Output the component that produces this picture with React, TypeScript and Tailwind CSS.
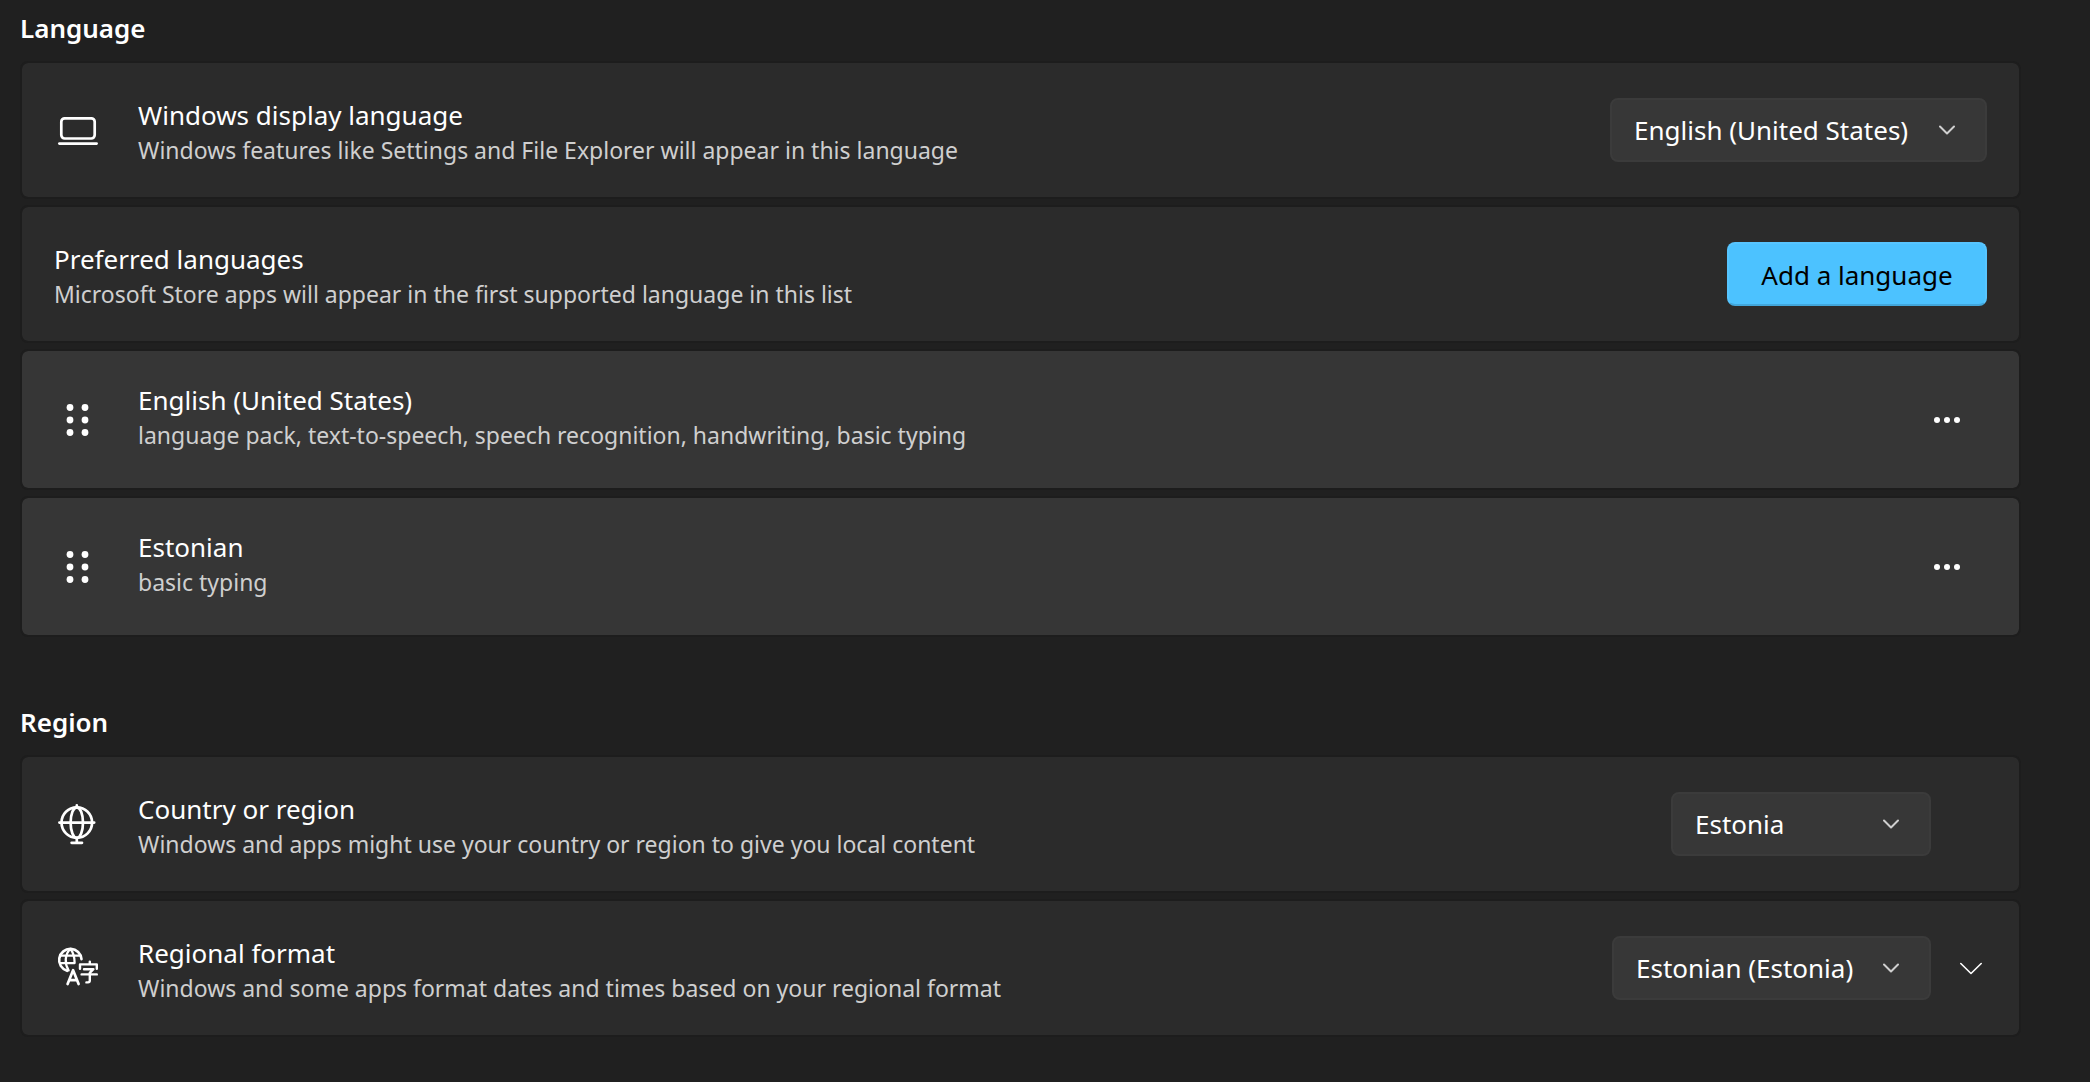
import React, { useId } from "react";

function LaptopIcon() {
  return (
    <svg width="48" height="48" viewBox="0 0 48 48" fill="none" stroke="white" strokeWidth="2.7" aria-hidden="true">
      <rect x="7.3" y="12.3" width="33.4" height="20.2" rx="3.4" />
      <path d="M5.4 37.600h37.2" strokeLinecap="round" />
    </svg>
  );
}

function GlobeStandIcon() {
  return (
    <svg width="48" height="48" viewBox="0 0 48 48" fill="none" stroke="white" strokeWidth="2.7" strokeLinecap="round" aria-hidden="true">
      <circle cx="22.800" cy="22.600" r="15.300" />
      <ellipse cx="22.800" cy="22.600" rx="6.200" ry="15.300" />
      <path d="M5.400 22.600h34.800M22.800 5.400v1.800M22.800 38v4.500M17.600 42.800h10.400" />
    </svg>
  );
}

function RegionalFormatIcon() {
  return (
    <svg width="48" height="48" viewBox="0 0 48 48" fill="none" stroke="white" strokeWidth="2.6" strokeLinecap="round" strokeLinejoin="round" aria-hidden="true">
      <path d="M27.500 15.200A11.200 11.200 0 1 0 13 26.800" />
      <path d="M14.600 26.400c-4-6.400-4.200-16 1.800-21.400c3 3.400 4.200 7.800 4.200 14M6.200 11.700h20M6.200 19.100h14.200" strokeWidth="2.300" />
      <path d="M13.600 40l5.500-13.800 5.500 13.800M15.600 36.200h7" strokeWidth="2.700" />
      <path d="M35.800 17.600v2.200M26 24.800v-4.400h16.800v4.400M30 25.200h9.400l-3.600 3.600v7.800q0 1.800-1.800 1.800h-1.600M27.600 30.400h15.200" strokeWidth="2.400" />
    </svg>
  );
}

function Grip() {
  return (
    <svg width="48" height="48" viewBox="0 0 48 48" fill="white" aria-hidden="true">
      <circle cx="16" cy="11.500" r="3.400" />
      <circle cx="31" cy="11.500" r="3.400" />
      <circle cx="16" cy="24" r="3.400" />
      <circle cx="31" cy="24" r="3.400" />
      <circle cx="16" cy="36.500" r="3.400" />
      <circle cx="31" cy="36.500" r="3.400" />
    </svg>
  );
}

function Labels({ title, detail, htmlFor }: { title: string; detail: string; htmlFor?: string }) {
  return (
    <div className="min-w-0 flex-1 pt-1">
      {htmlFor ? (
        <label htmlFor={htmlFor} className="block text-[26px] leading-9">{title}</label>
      ) : (
        <h3 className="text-[26px] leading-9">{title}</h3>
      )}
      <p className="text-[23px] leading-[34px] text-[#cfcfcf]">{detail}</p>
    </div>
  );
}

function Card({ children }: { children: React.ReactNode }) {
  return (
    <div className="flex min-h-[138px] items-center rounded-lg border-2 border-[#1d1d1d] bg-[#2b2b2b] bg-clip-padding px-8">
      {children}
    </div>
  );
}

function IconSlot({ children }: { children: React.ReactNode }) {
  return <div className="mr-9 flex w-12 shrink-0 justify-center">{children}</div>;
}

function Select({ id, value, options, className }: { id: string; value: string; options: string[]; className: string }) {
  return (
    <div className={"relative shrink-0 " + className}>
      <select
        id={id}
        defaultValue={value}
        className="h-16 w-full appearance-none rounded-lg border-2 border-[#3b3b3b] bg-[#373737] pr-16 pl-[22px] text-[26px] text-white"
      >
        {options.map((o) => (
          <option key={o}>{o}</option>
        ))}
      </select>
      <svg className="pointer-events-none absolute top-6 right-8" width="16" height="16" viewBox="0 0 16 16" fill="none" stroke="#cfcfcf" strokeWidth="2" strokeLinecap="round" strokeLinejoin="round" aria-hidden="true">
        <path d="M1 4.500l7 7 7-7" />
      </svg>
    </div>
  );
}

function LanguageRow({ name, features }: { name: string; features: string }) {
  return (
    <li className="flex min-h-[141px] items-center rounded-lg border-2 border-[#1d1d1d] bg-[#363636] bg-clip-padding px-8">
      <button type="button" aria-label={"Reorder " + name} className="mr-9 w-12 shrink-0">
        <Grip />
      </button>
      <div className="min-w-0 flex-1 pb-2.5">
        <Labels title={name} detail={features} />
      </div>
      <button type="button" aria-label={"More options for " + name} className="flex h-16 w-20 shrink-0 items-center justify-center">
        <svg width="28" height="8" viewBox="0 0 28 8" fill="white" aria-hidden="true">
          <circle cx="4" cy="4" r="3" />
          <circle cx="14" cy="4" r="3" />
          <circle cx="24" cy="4" r="3" />
        </svg>
      </button>
    </li>
  );
}

export default function App() {
  const id = useId();
  return (
    <main className="min-h-screen bg-[#202020] pt-2 pr-[69px] pb-11 pl-5 font-['Noto_Sans','Open_Sans',sans-serif] text-white">
      <section>
        <h2 className="mb-[13px] text-[26px] leading-10 font-semibold">Language</h2>
        <div className="flex flex-col gap-1.5">
          <Card>
            <IconSlot><LaptopIcon /></IconSlot>
            <Labels htmlFor={id + "display"} title="Windows display language" detail="Windows features like Settings and File Explorer will appear in this language" />
            <Select id={id + "display"} className="w-[377px]" value="English (United States)" options={["English (United States)", "Estonian"]} />
          </Card>
          <Card>
            <Labels title="Preferred languages" detail="Microsoft Store apps will appear in the first supported language in this list" />
            <button type="button" className="h-16 w-[260px] shrink-0 rounded-lg border-2 border-[#57c5ff] border-b-[#42a7dc] bg-[#4cc2ff] pt-0.5 text-[26px] text-black">
              Add a language
            </button>
          </Card>
          <ul className="flex flex-col gap-1.5">
            <LanguageRow name="English (United States)" features="language pack, text-to-speech, speech recognition, handwriting, basic typing" />
            <LanguageRow name="Estonian" features="basic typing" />
          </ul>
        </div>
      </section>
      <section className="mt-[65px]">
        <h2 className="mb-[13px] text-[26px] leading-10 font-semibold">Region</h2>
        <div className="flex flex-col gap-1.5">
          <Card>
            <IconSlot><GlobeStandIcon /></IconSlot>
            <Labels htmlFor={id + "country"} title="Country or region" detail="Windows and apps might use your country or region to give you local content" />
            <div className="pr-14">
              <Select id={id + "country"} className="w-[260px]" value="Estonia" options={["Estonia"]} />
            </div>
          </Card>
          <Card>
            <IconSlot><RegionalFormatIcon /></IconSlot>
            <Labels htmlFor={id + "format"} title="Regional format" detail="Windows and some apps format dates and times based on your regional format" />
            <Select id={id + "format"} className="w-[319px]" value="Estonian (Estonia)" options={["Estonian (Estonia)"]} />
            <button type="button" aria-label="Show more regional format settings" className="flex h-16 w-14 shrink-0 items-center justify-end pr-1">
              <svg width="24" height="24" viewBox="0 0 24 24" fill="none" stroke="white" strokeWidth="1.600" strokeLinecap="round" strokeLinejoin="round" aria-hidden="true">
                <path d="M1.800 7.500l10.200 10 10.200-10" />
              </svg>
            </button>
          </Card>
        </div>
      </section>
    </main>
  );
}
